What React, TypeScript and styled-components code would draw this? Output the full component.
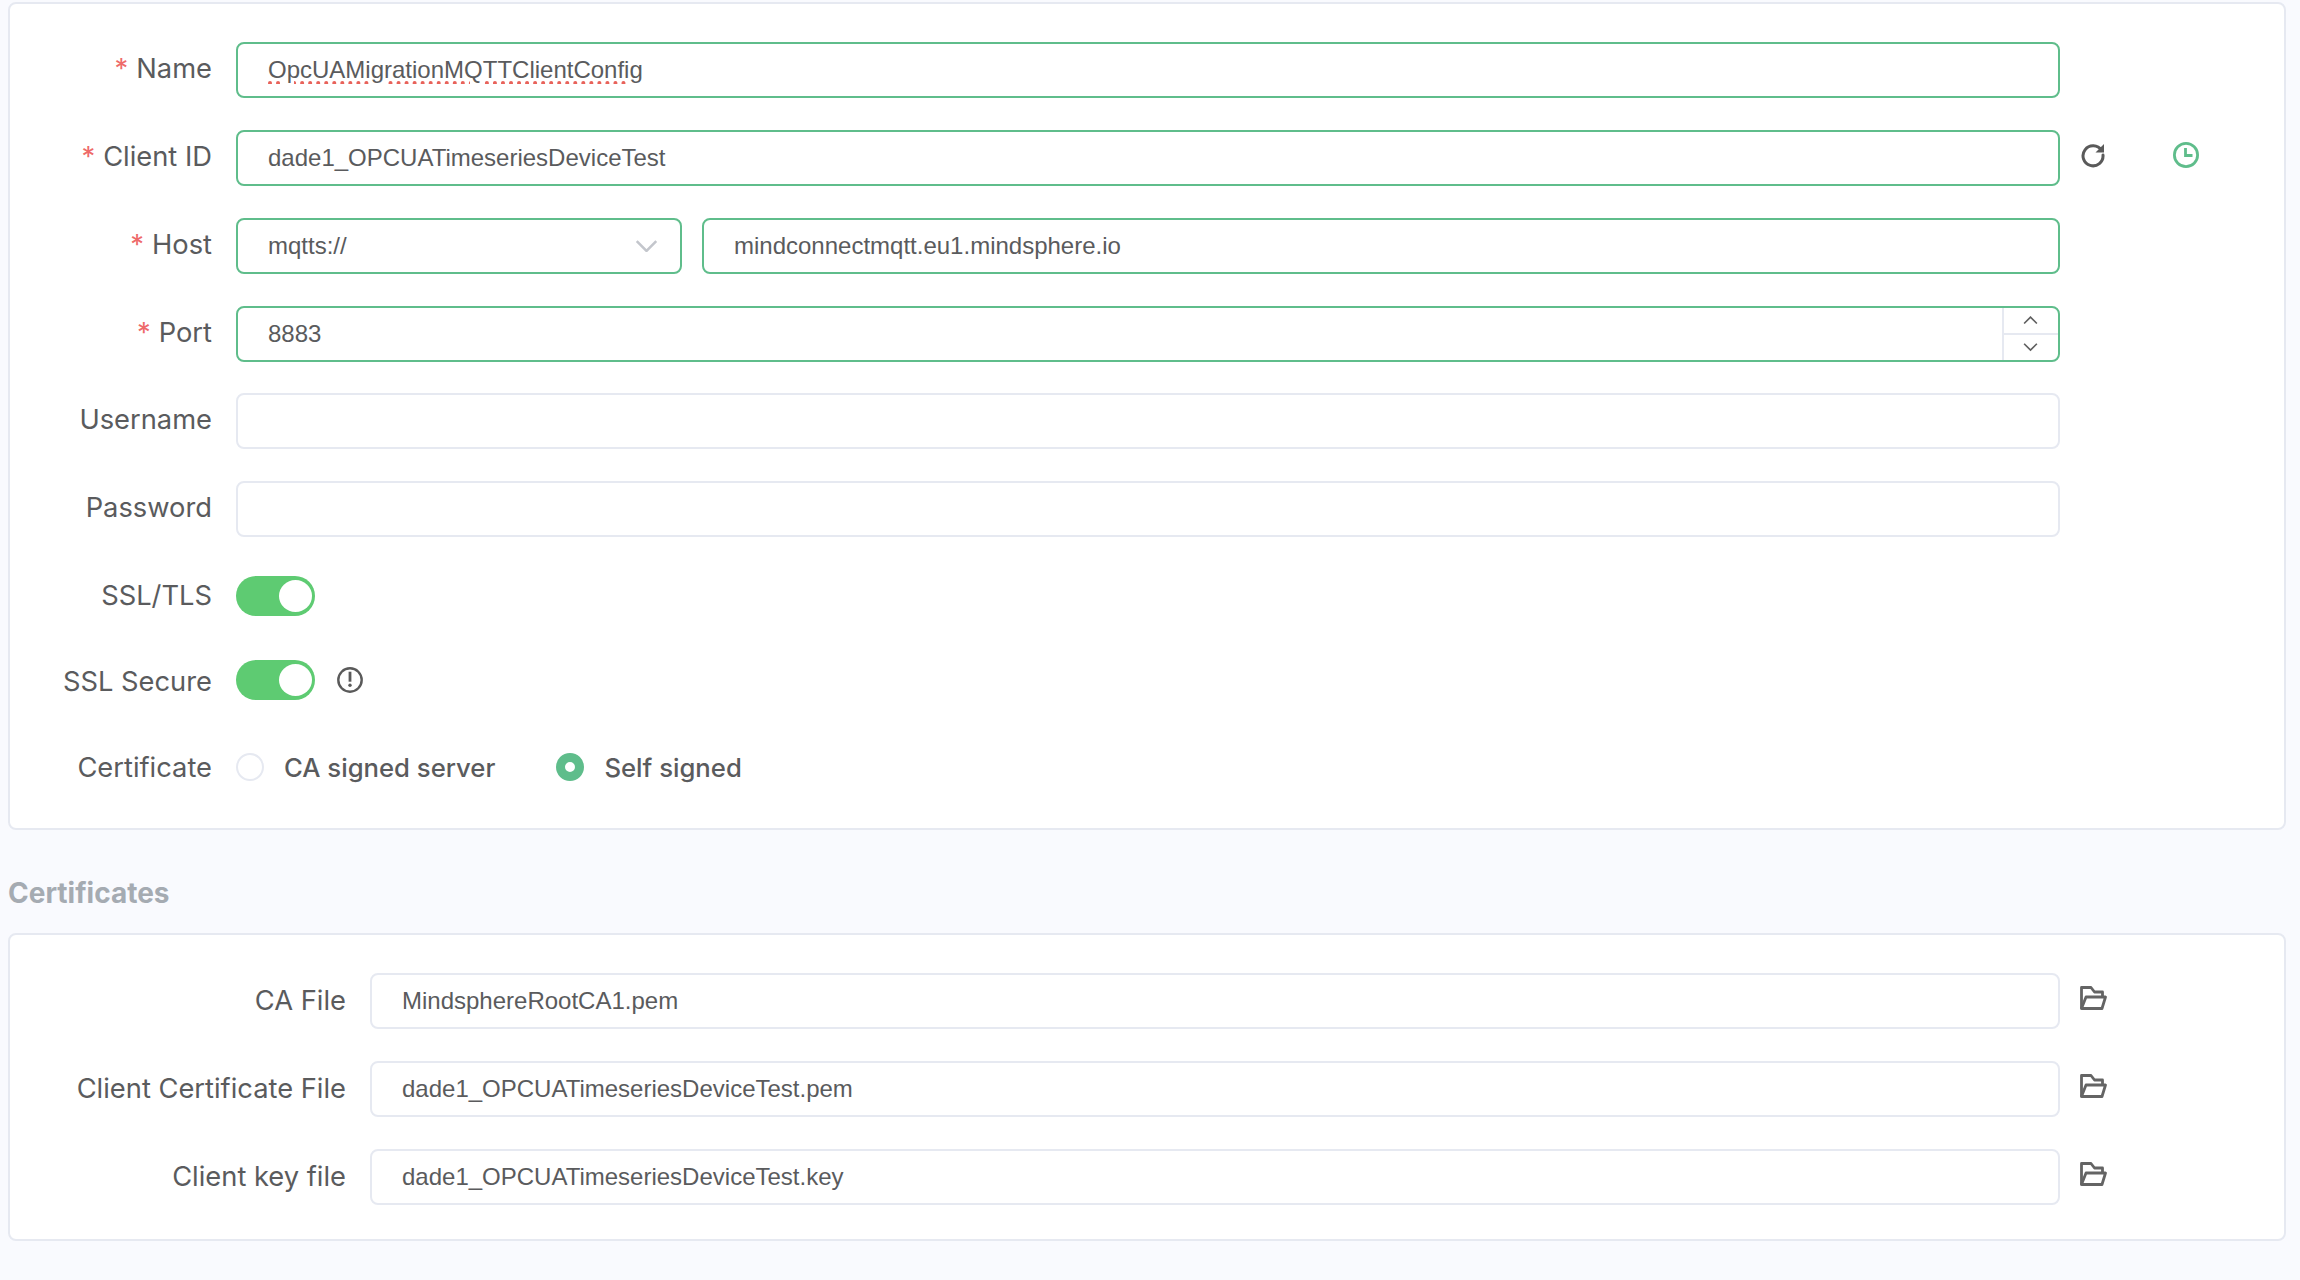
import React from "react";
import styled, { createGlobalStyle } from "styled-components";

const LABEL_FONT = `Inter, "Liberation Sans", sans-serif`;
const FIELD_FONT = `"Liberation Sans", Arial, sans-serif`;
const GREEN = "#5fbd8b";
const LINE = "#e6e9f1";
const INK = "#5a5b5d";

const Global = createGlobalStyle`
  html, body { margin: 0; padding: 0; background: #f9fafe; }
  body { font-family: ${LABEL_FONT}; }
  * { box-sizing: border-box; }
`;

const Page = styled.div`
  width: 2300px;
  height: 1280px;
  overflow: hidden;
  padding: 2px 14px 0 8px;
  background: #f9fafe;
`;

const Card = styled.section<{ $pt: number; $h: number }>`
  height: ${(p) => p.$h}px;
  padding-top: ${(p) => p.$pt}px;
  background: #fff;
  border: 2px solid ${LINE};
  border-radius: 8px;
`;

const SectionTitle = styled.h2`
  margin: 0;
  height: 103px;
  padding-top: 22px;
  display: flex;
  align-items: center;
  font-size: 28px;
  font-weight: 700;
  line-height: 32px;
  color: #a5abb2;
`;

const Row = styled.div<{ $h?: number; $mb: number }>`
  display: flex;
  align-items: center;
  height: ${(p) => p.$h ?? 56}px;
  margin-bottom: ${(p) => p.$mb}px;
`;

const Label = styled.label<{ $w: number; $dy?: number }>`
  flex: none;
  width: ${(p) => p.$w}px;
  margin-right: 24px;
  margin-top: ${(p) => p.$dy ?? -2}px;
  text-align: right;
  font-size: 27.3px;
  line-height: 36px;
  color: ${INK};
  white-space: nowrap;
`;

const Star = styled.span`
  color: #ee6a6a;
  margin-right: 8px;
`;

const Fields = styled.div<{ $w: number }>`
  flex: none;
  width: ${(p) => p.$w}px;
  display: flex;
  gap: 20px;
`;

const InputBox = styled.div<{ $active?: boolean; $w?: number }>`
  flex: ${(p) => (p.$w ? "none" : "1")};
  width: ${(p) => (p.$w ? `${p.$w}px` : "auto")};
  height: 56px;
  display: flex;
  align-items: center;
  background: #fff;
  border: 2px solid ${(p) => (p.$active ? GREEN : LINE)};
  border-radius: 8px;
`;

const TextInput = styled.input<{ $spell?: boolean }>`
  flex: 1;
  min-width: 0;
  height: 100%;
  padding: 0 30px;
  border: 0;
  outline: 0;
  background: transparent;
  font-family: ${FIELD_FONT};
  font-size: 24px;
  color: ${INK};
  text-decoration: ${(p) => (p.$spell ? "underline dotted #e8625a 4px" : "none")};
  text-underline-offset: 3px;
`;

const SelectText = styled.span`
  flex: 1;
  padding-left: 30px;
  font-family: ${FIELD_FONT};
  font-size: 24px;
  color: ${INK};
`;

const SelectArrow = styled.span`
  display: flex;
  margin-right: 22px;
`;

const Stepper = styled.div`
  flex: none;
  width: 56px;
  height: 100%;
  display: flex;
  flex-direction: column;
  border-left: 2px solid ${LINE};
`;

const StepButton = styled.button<{ $top?: boolean }>`
  flex: 1;
  padding: 0 2px 0 0;
  display: flex;
  align-items: center;
  justify-content: center;
  background: transparent;
  border: 0;
  border-bottom: ${(p) => (p.$top ? `2px solid ${LINE}` : "0")};
`;

const Aside = styled.div`
  display: flex;
  align-items: center;
  margin: -6px 0 0 20px;
  gap: 66px;
`;

const Switch = styled.div`
  flex: none;
  position: relative;
  width: 79px;
  height: 40px;
  border-radius: 20px;
  background: #5ecb72;
  &::after {
    content: "";
    position: absolute;
    top: 4px;
    right: 3px;
    width: 33px;
    height: 32px;
    border-radius: 50%;
    background: #fff;
  }
`;

const Hint = styled.span`
  display: flex;
  margin-left: 22px;
`;

const Radio = styled.span<{ $on?: boolean }>`
  flex: none;
  width: 28px;
  height: 28px;
  border-radius: 50%;
  background: #fff;
  border: ${(p) => (p.$on ? `9px solid ${GREEN}` : `2px solid ${LINE}`)};
`;

const RadioGroup = styled.div`
  display: flex;
  align-items: center;
`;

const RadioLabel = styled.span<{ $gap: number }>`
  margin-left: 20px;
  margin-right: ${(p) => p.$gap}px;
  font-size: 25.7px;
  font-weight: 500;
  color: ${INK};
`;

const Refresh = () => (
  <svg width="26" height="26" viewBox="0 1 26 26" fill="none">
    <path d="M21.5 9.5A10 10 0 1 0 23 14" stroke="#5a5a5a" strokeWidth="3" strokeLinecap="round" />
    <path d="M24 3v8.5h-8.5z" fill="#5a5a5a" />
  </svg>
);

const Clock = () => (
  <svg width="28" height="28" viewBox="0 0 28 28" fill="none">
    <circle cx="14" cy="14" r="11.6" stroke={GREEN} strokeWidth="2.8" />
    <path d="M13.5 7v7.5h7" stroke={GREEN} strokeWidth="2.8" />
  </svg>
);

const Folder = () => (
  <svg width="27" height="24" viewBox="0 0 27 24" fill="none">
    <path d="M1.5 22.5V1.5h9.5l3.5 4.5h8v4.5" stroke="#646464" strokeWidth="2.8" strokeLinejoin="round" />
    <path d="M1.5 22.5H22L25.5 11H6z" stroke="#646464" strokeWidth="2.8" strokeLinejoin="round" />
  </svg>
);

const Info = () => (
  <svg width="26" height="26" viewBox="0 0 26 26" fill="none">
    <circle cx="13" cy="13" r="11.7" stroke="#5a5a5a" strokeWidth="2.4" />
    <path d="M13 4.7v10" stroke="#5a5a5a" strokeWidth="2.8" />
    <circle cx="13" cy="18.2" r="1.7" fill="#5a5a5a" />
  </svg>
);

const Chevron = ({ dir, w, color }: { dir: "up" | "down"; w: number; color: string }) => (
  <svg width={w} height={w * 0.55} viewBox="0 0 20 11" fill="none">
    <path d={dir === "up" ? "M1.5 10L10 1.5L18.5 10" : "M1.5 1L10 9.5L18.5 1"} stroke={color} strokeWidth="2.2" />
  </svg>
);

const Field = ({ value, active, spell }: { value: string; active?: boolean; spell?: boolean }) => (
  <InputBox $active={active}>
    <TextInput readOnly value={value} spellCheck={false} $spell={spell} />
  </InputBox>
);

const Required = ({ children }: { children: string }) => (
  <Label $w={202}>
    <Star>*</Star>
    {children}
  </Label>
);

const files = [
  ["CA File", "MindsphereRootCA1.pem"],
  ["Client Certificate File", "dade1_OPCUATimeseriesDeviceTest.pem"],
  ["Client key file", "dade1_OPCUATimeseriesDeviceTest.key"],
];

export default function App() {
  return (
    <Page>
      <Global />
      <Card $pt={38} $h={828}>
        <Row $mb={32}>
          <Required>Name</Required>
          <Fields $w={1824}>
            <Field active spell value="OpcUAMigrationMQTTClientConfig" />
          </Fields>
        </Row>
        <Row $mb={32}>
          <Required>Client ID</Required>
          <Fields $w={1824}>
            <Field active value="dade1_OPCUATimeseriesDeviceTest" />
          </Fields>
          <Aside>
            <Refresh />
            <Clock />
          </Aside>
        </Row>
        <Row $mb={32}>
          <Required>Host</Required>
          <Fields $w={1824}>
            <InputBox $active $w={446}>
              <SelectText>mqtts://</SelectText>
              <SelectArrow>
                <Chevron dir="down" w={23} color="#c3c6cc" />
              </SelectArrow>
            </InputBox>
            <Field active value="mindconnectmqtt.eu1.mindsphere.io" />
          </Fields>
        </Row>
        <Row $mb={31}>
          <Required>Port</Required>
          <Fields $w={1824}>
            <InputBox $active>
              <TextInput readOnly value="8883" />
              <Stepper>
                <StepButton $top aria-label="up">
                  <Chevron dir="up" w={15} color="#5f5f5f" />
                </StepButton>
                <StepButton aria-label="down">
                  <Chevron dir="down" w={15} color="#5f5f5f" />
                </StepButton>
              </Stepper>
            </InputBox>
          </Fields>
        </Row>
        <Row $mb={32}>
          <Label $w={202}>Username</Label>
          <Fields $w={1824}>
            <Field value="" />
          </Fields>
        </Row>
        <Row $mb={39}>
          <Label $w={202}>Password</Label>
          <Fields $w={1824}>
            <Field value="" />
          </Fields>
        </Row>
        <Row $h={40} $mb={44}>
          <Label $w={202} $dy={0}>SSL/TLS</Label>
          <Switch />
        </Row>
        <Row $h={40} $mb={49}>
          <Label $w={202} $dy={4}>SSL Secure</Label>
          <Switch />
          <Hint>
            <Info />
          </Hint>
        </Row>
        <Row $h={36} $mb={0}>
          <Label $w={202} $dy={2}>Certificate</Label>
          <RadioGroup>
            <Radio />
            <RadioLabel $gap={61}>CA signed server</RadioLabel>
            <Radio $on />
            <RadioLabel $gap={0}>Self signed</RadioLabel>
          </RadioGroup>
        </Row>
      </Card>
      <SectionTitle>Certificates</SectionTitle>
      <Card $pt={38} $h={308}>
        {files.map(([label, value], i) => (
          <Row key={label} $mb={i === 2 ? 0 : 32}>
            <Label $w={336} $dy={-1}>{label}</Label>
            <Fields $w={1690}>
              <Field value={value} />
            </Fields>
            <Aside>
              <Folder />
            </Aside>
          </Row>
        ))}
      </Card>
    </Page>
  );
}
